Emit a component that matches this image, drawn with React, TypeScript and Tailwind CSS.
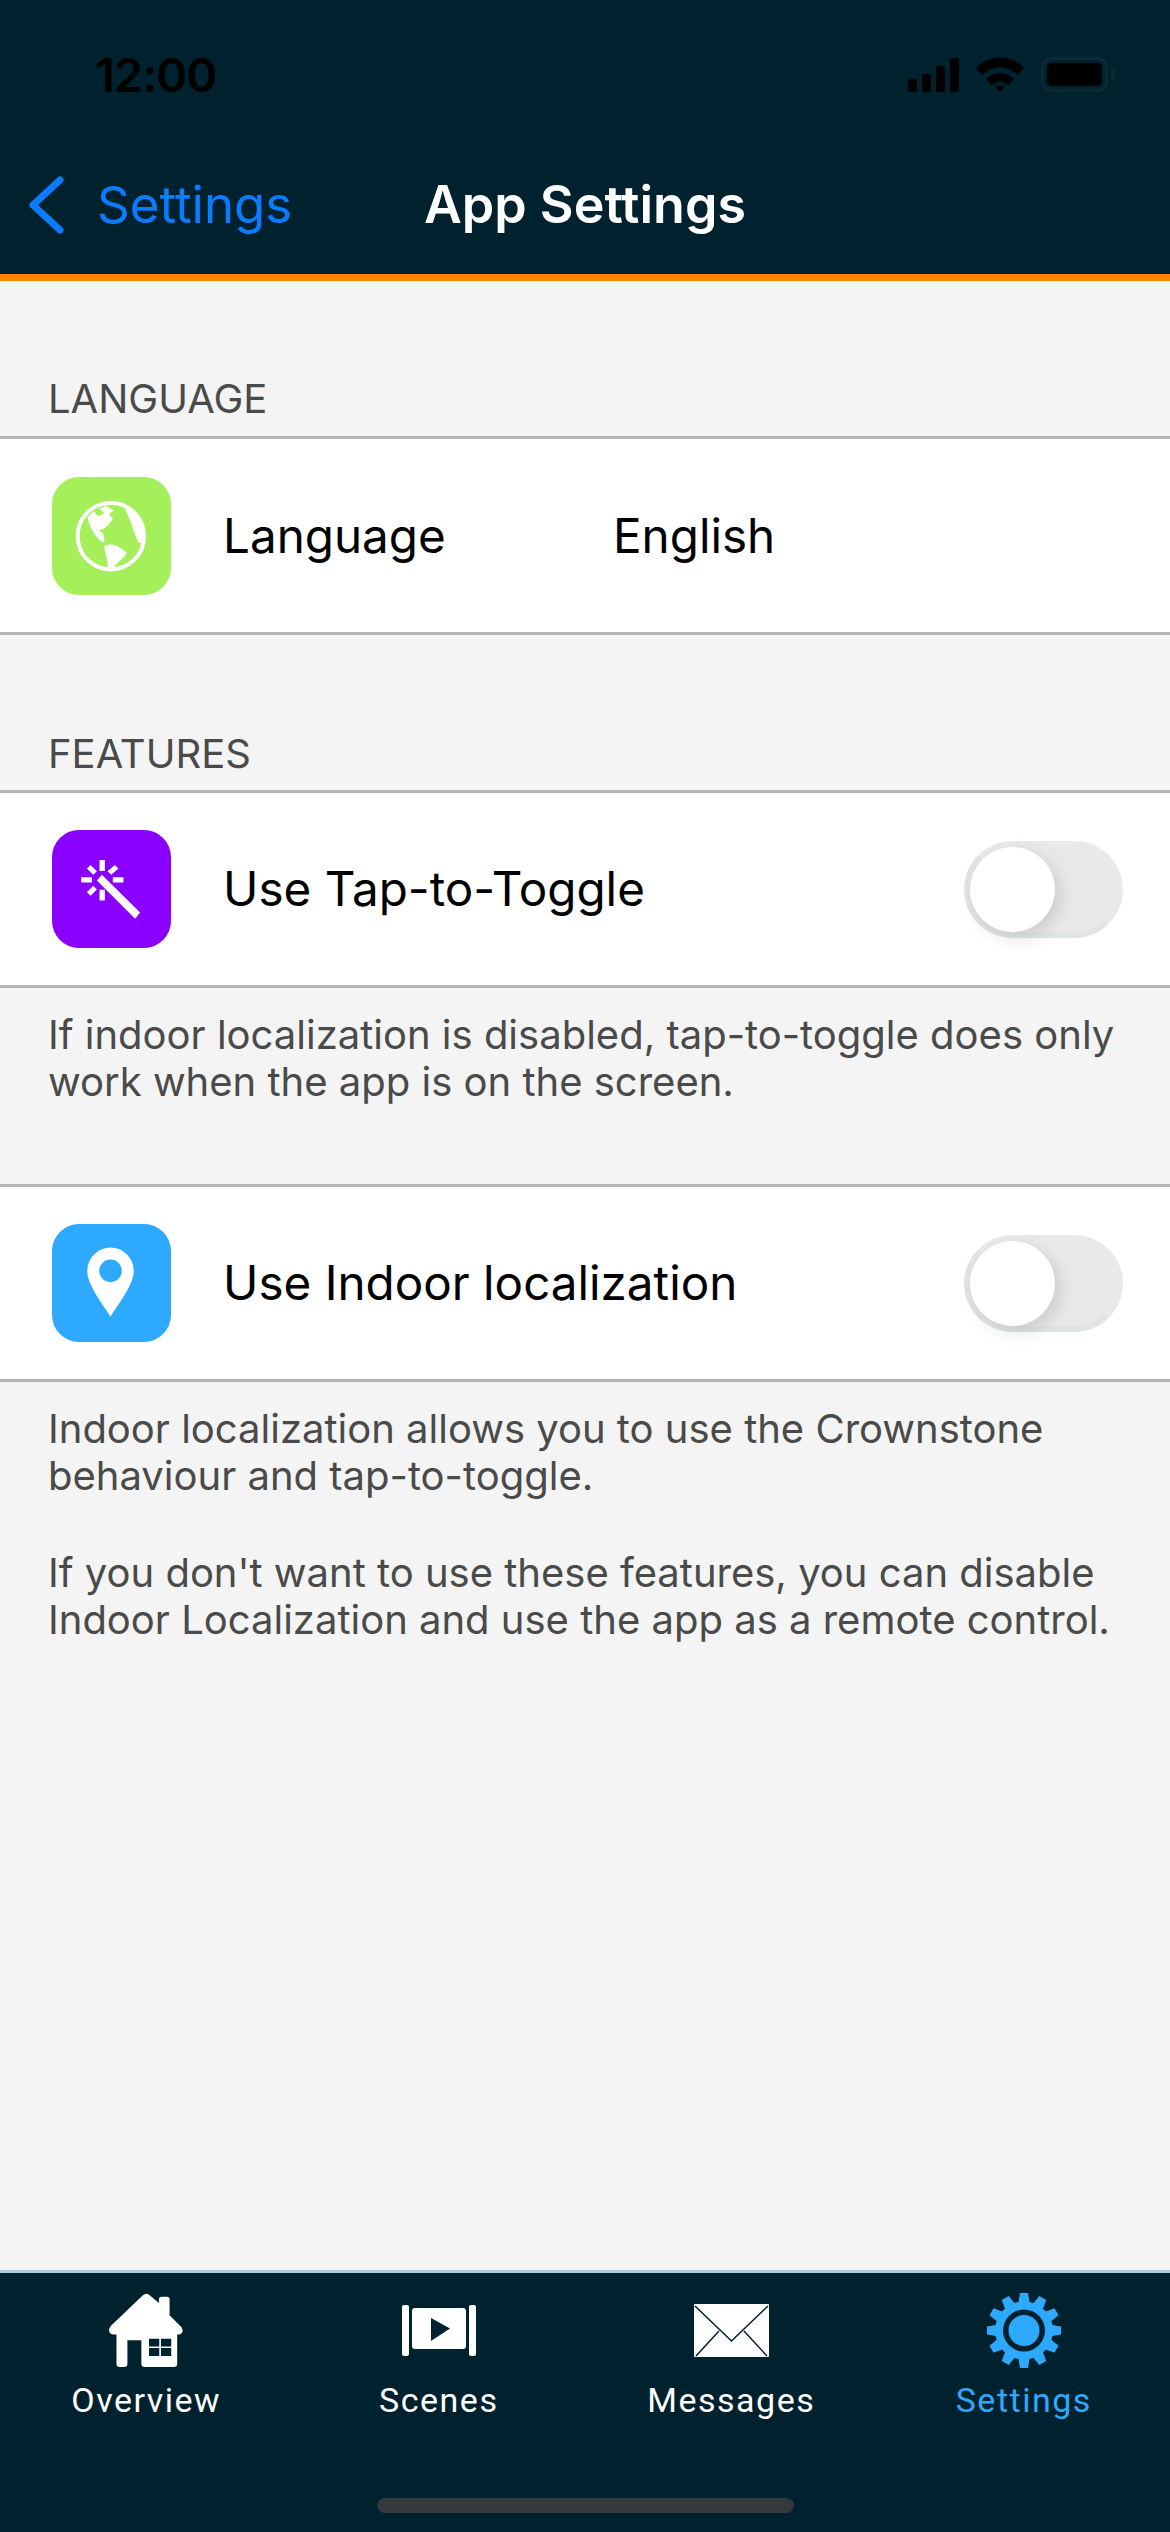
import type { ReactNode } from 'react';

const sans = 'font-["Inter","Liberation_Sans",sans-serif]';

// tile glyphs are drawn in a 355 unit box that covers the whole tile
function GlobeGlyph() {
  return (
    <svg width="118" height="118" viewBox="68 47 355 355" fill="#fff">
      <circle cx="242" cy="225" r="100" fill="none" stroke="#fff" strokeWidth="12" />
      <path d="M172 168C178 200 195 225 215 243L223 240L219 216L205 208C218 206 236 195 248 172L236 160L250 148L228 134L207 142L222 155L204 165L190 150Z" />
      <path d="M222 255C240 245 262 250 290 275C280 295 262 300 250 322L232 318C236 300 224 280 222 255Z" />
      <path d="M280 134C300 170 308 205 325 245L338 245C350 195 325 150 280 134Z" />
    </svg>
  );
}

function WandGlyph() {
  return (
    <svg width="118" height="118" viewBox="68 60 355 355" fill="#fff">
      <path d="M208 150h16v33h-16zM208 240h16v32h-16zM153 202h32v16h-32zM248 202h32v16h-32z" />
      <path d="M181 165L200 184L189 195L170 176zM254 165L265 176L243 195L232 184zM189 228L200 239L181 258L170 247z" />
      <path d="M215 195L330 308L315 327L200 212z" />
    </svg>
  );
}

function PinGlyph() {
  return (
    <svg width="118" height="118" viewBox="68 57 355 355" fill="#fff">
      <path
        fillRule="evenodd"
        d="M241 336C215 295 171 240 171 198A70 70 0 1 1 311 198C311 240 267 295 241 336ZM241 164A34 34 0 1 0 241 232A34 34 0 1 0 241 164Z"
      />
    </svg>
  );
}

function HouseIcon() {
  return (
    <svg width="78" height="77" viewBox="35 22 232 232" fill="#fff">
      <path d="M140 33Q152 22 164 33L190 55L190 44Q190 36 198 36L214 36Q222 36 222 44L222 92L258 128Q268 145 250 150L245 150L245 238Q245 248 235 248L147 248Q137 248 137 238L137 167L95 167L95 238Q95 248 85 248L72 248Q62 248 62 238L62 150L52 150Q32 145 44 125Z" />
      <path fill="#00212e" d="M160 163h31v23h-31zM196 163h31v23h-31zM160 191h31v24h-31zM196 191h31v24h-31z" />
    </svg>
  );
}

function ScenesIcon() {
  return (
    <svg width="74" height="51" viewBox="0 0 74 51" fill="#fff">
      <rect x="0" y="0" width="7" height="51" rx="2" />
      <rect x="67" y="0" width="7" height="51" rx="2" />
      <rect x="10" y="3" width="54" height="41" rx="3" />
      <path fill="#00212e" d="M29 13l19 10.500-19 12.500z" />
    </svg>
  );
}

function MailIcon() {
  return (
    <svg width="75" height="53" viewBox="0 0 75 53">
      <rect x="0" y="0" width="75" height="53" rx="1" fill="#fff" />
      <path d="M1 2l36.500 35L74 2M25 27L2 52M50 27l23 25" fill="none" stroke="#00212e" strokeWidth="1.500" />
    </svg>
  );
}

function GearIcon() {
  const teeth = Array.from({ length: 12 }, (_, i) => i * 30);
  return (
    <svg width="74" height="75" viewBox="0 0 74 75">
      {teeth.map(deg => (
        <path key={deg} d="M33 0h8l2 12H31z" fill="#2daaff" transform={`rotate(${deg} 37 37.500)`} />
      ))}
      <circle cx="37" cy="37.500" r="29" fill="#2daaff" />
      <circle cx="37" cy="37.500" r="21" fill="#00212e" />
      <circle cx="37" cy="37.500" r="15.500" fill="#2daaff" />
    </svg>
  );
}

function Toggle() {
  return (
    <div className="w-[159px] h-[97px] rounded-full bg-[#e9e9ea] border-[6px] border-[#e1e4e4] border-r-[#e9e9ea] border-t-[#e9e9ea] flex items-center">
      <div className="w-[85px] h-[85px] rounded-full bg-white shadow-[6px_6px_18px_rgba(0,0,0,0.12)]" />
    </div>
  );
}

function IconTile({ color, children }: { color: string; children: ReactNode }) {
  return (
    <div className={`w-[119px] h-[118px] rounded-[27px] flex items-center justify-center ${color}`}>
      {children}
    </div>
  );
}

function Row({ icon, label, className, children }: { icon: ReactNode; label: ReactNode; className: string; children?: ReactNode }) {
  return (
    <div className={`bg-white border-y-[3px] border-[#b5b5b5] pl-[52px] pr-[47px] flex items-center ${className}`}>
      {icon}
      <div className="ml-[52px] text-[47.6px] text-black">{label}</div>
      {children}
    </div>
  );
}

function Tab({ icon, label, active }: { icon: ReactNode; label: string; active?: boolean }) {
  return (
    <div className="flex flex-col items-center">
      <div className="h-[75px] flex items-center justify-center">{icon}</div>
      <div className={`mt-[12px] font-["Roboto",sans-serif] text-[34px] leading-[40px] tracking-[1.5px] ${active ? 'text-[#2daaff]' : 'text-white'}`}>{label}</div>
    </div>
  );
}

export default function App() {
  return (
    <div className={`w-[1170px] h-[2532px] flex flex-col bg-[#f4f4f4] ${sans}`}>
      <div className="h-[281px] bg-[#00212e] border-b-[7px] border-[#ff8400] shrink-0">
        <div className="h-[166px] pl-[95px] pr-[55px] pt-[47px] flex items-start justify-between">
          <div className="text-[47px] leading-[56px] font-semibold text-black tracking-[-1px]">12:00</div>
          <div className="flex items-center gap-[17px] pt-[10px]">
            <svg width="51" height="34" viewBox="0 0 51 34" fill="#000">
              <rect x="0" y="21" width="9" height="13" rx="2" />
              <rect x="14" y="16" width="9" height="18" rx="2" />
              <rect x="28" y="8" width="9" height="26" rx="2" />
              <rect x="42" y="0" width="9" height="34" rx="2" />
            </svg>
            <svg width="48" height="35" viewBox="0 0 48 35" fill="#000">
              <path d="M0 11C13 -3 35 -3 48 11L42 18C32 8 16 8 6 18Z" />
              <path d="M10 22C18 14 30 14 38 22L32 28C27 24 21 24 16 28Z" />
              <path d="M19 30C22 28 26 28 29 30L24 35Z" />
            </svg>
            <div className="flex items-center">
              <div className="w-[67px] h-[35px] rounded-[10px] border-[3px] border-[#0b2a36] p-[3px]">
                <div className="w-full h-full rounded-[5px] bg-black" />
              </div>
              <div className="ml-[3px] w-[4px] h-[11px] rounded-r-full bg-[#0b2a36]" />
            </div>
          </div>
        </div>
        <div className="grid grid-cols-[1fr_auto_1fr] items-center h-[78px]">
          <div className="flex items-center pl-[28px]">
            <svg width="36" height="58" viewBox="0 0 36 58" fill="none" stroke="#0a7cff" strokeWidth="7" strokeLinecap="round" strokeLinejoin="round">
              <path d="M32 4L5 29l27 25" />
            </svg>
            <span className="ml-[33px] text-[51px] text-[#0a7cff]">Settings</span>
          </div>
          <div className="text-[52px] font-semibold text-white">App Settings</div>
          <div />
        </div>
      </div>

      <div className="flex-1">
        <div className="h-[155px] flex items-end pl-[48px] pb-[14px] text-[40px] leading-[47px] text-[#4a4a4a]">LANGUAGE</div>
        <Row
          className="h-[199px]"
          icon={<IconTile color="bg-[#a5ef5b]"><GlobeGlyph /></IconTile>}
          label={<div className="w-[390px]">Language</div>}
        >
          <div className="text-[47.6px] text-black">English</div>
        </Row>
        <div className="h-[155px] flex items-end pl-[48px] pb-[13px] text-[40px] leading-[47px] text-[#4a4a4a]">FEATURES</div>
        <Row className="h-[198px]" icon={<IconTile color="bg-[#8a00ff]"><WandGlyph /></IconTile>} label="Use Tap-to-Toggle">
          <div className="ml-auto"><Toggle /></div>
        </Row>
        <div className="pl-[48px] pr-[30px] pt-[23px] h-[196px] text-[40px] leading-[47px] text-[#4a4a4a]">
          If indoor localization is disabled, tap-to-toggle does only<br />work when the app is on the screen.
        </div>
        <Row className="h-[198px]" icon={<IconTile color="bg-[#2daaff]"><PinGlyph /></IconTile>} label="Use Indoor localization">
          <div className="ml-auto"><Toggle /></div>
        </Row>
        <div className="pl-[48px] pr-[30px] pt-[23px] text-[40px] leading-[47px] text-[#4a4a4a]">
          <p>Indoor localization allows you to use the Crownstone<br />behaviour and tap-to-toggle.</p>
          <p className="mt-[50px]">If you don't want to use these features, you can disable<br />Indoor Localization and use the app as a remote control.</p>
        </div>
      </div>

      <div className="h-[262px] shrink-0 bg-[#00212e] border-t-[3px] border-[#aacfd8] flex flex-col">
        <div className="grid grid-cols-4 pt-[20px]">
          <Tab icon={<HouseIcon />} label="Overview" />
          <Tab icon={<ScenesIcon />} label="Scenes" />
          <Tab icon={<MailIcon />} label="Messages" />
          <Tab icon={<GearIcon />} label="Settings" active />
        </div>
        <div className="mt-[78px] mx-auto w-[417px] h-[15px] rounded-full bg-[#33393c]" />
      </div>
    </div>
  );
}
